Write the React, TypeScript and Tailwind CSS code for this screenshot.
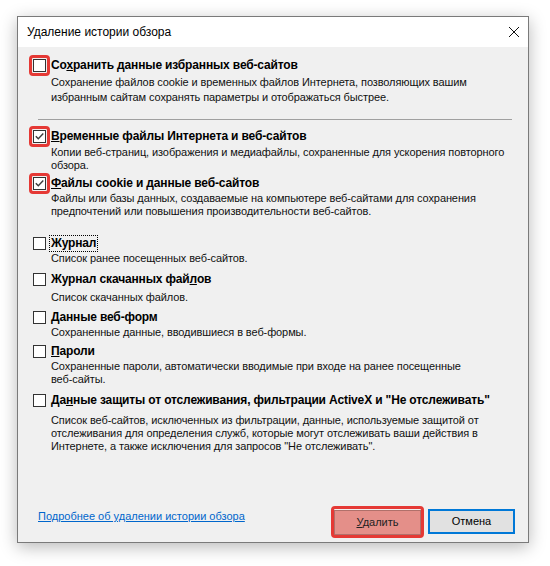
import type { ReactNode } from 'react';

const font = { fontFamily: '"Segoe UI", Tahoma, "Liberation Sans", "Noto Sans", sans-serif' };

function Check({ checked }: { checked: boolean }) {
  return (
    <div className="w-[13px] h-[13px] border border-[#333333] bg-white flex items-center justify-center shrink-0">
      {checked && (
        <svg width="11" height="11" viewBox="0 0 11 11">
          <path d="M1.8 5.2 L4.3 7.8 L9.3 2.6" fill="none" stroke="#3c3c3c" strokeWidth="1.4" />
        </svg>
      )}
    </div>
  );
}

function Box({ checked, marked }: { checked: boolean; marked?: boolean }) {
  return (
    <div className="relative w-[13px] h-[13px] shrink-0">
      {marked && (
        <div className="absolute -left-[4px] -top-[4px] w-[21px] h-[21px] rounded-[4px] border-[3px] border-[#e53935]" />
      )}
      <Check checked={checked} />
    </div>
  );
}

function Item({
  label,
  lines,
  checked = false,
  marked = false,
  focused = false,
  mt,
  descMt = '',
  leading = 'leading-[13px]',
}: {
  label: ReactNode;
  lines: string[];
  checked?: boolean;
  marked?: boolean;
  focused?: boolean;
  mt: string;
  descMt?: string;
  leading?: string;
}) {
  return (
    <div className={mt}>
      <div className="flex items-center h-[17px] gap-[4px]">
        <Box checked={checked} marked={marked} />
        <span
          className={`text-[12px] font-bold text-black leading-[15px] px-[1px] whitespace-nowrap tracking-[-0.15px] ${
            focused ? 'outline outline-1 outline-dotted outline-black' : ''
          }`}
        >
          {label}
        </span>
      </div>
      <div className={`pl-[18px] text-[11px] tracking-[-0.1px] text-[#111] whitespace-nowrap ${leading} ${descMt}`}>
        {lines.map((l) => (
          <div key={l}>{l}</div>
        ))}
      </div>
    </div>
  );
}

export default function App() {
  return (
    <div className="w-[550px] h-[566px] bg-white pt-[16px] pl-[17px]" style={font}>
      <div className="w-[512px] h-[527px] border border-[#7a7a7a] shadow-[0_4px_16px_rgba(0,0,0,0.28)] flex flex-col">
        {/* Title bar */}
        <div className="h-[30px] bg-white flex items-center justify-between pl-[9px] pr-[8px] shrink-0">
          <span className="text-[12px] text-black">Удаление истории обзора</span>
          <svg width="12" height="12" viewBox="0 0 12 12">
            <path d="M1 1 L11 11 M11 1 L1 11" stroke="#111" strokeWidth="1" />
          </svg>
        </div>

        {/* Content */}
        <div className="flex-1 bg-[#f0f0f0] flex flex-col pl-[15px] pr-[13px]">
          <Item
            mt="mt-[10px]"
            marked
            descMt="mt-[1px]"
            leading="leading-[15px]"
            label={
              <>
                Со<u>х</u>ранить данные избранных веб-сайтов
              </>
            }
            lines={[
              'Сохранение файлов cookie и временных файлов Интернета, позволяющих вашим',
              'избранным сайтам сохранять параметры и отображаться быстрее.',
            ]}
          />

          <div className="mt-[14px] ml-[5px] mr-[3px] h-px bg-[#a0a0a0]" />

          <Item
            mt="mt-[8px]"
            checked
            marked
            descMt="mt-[1px]"
            label={
              <>
                <u>В</u>ременные файлы Интернета и веб-сайтов
              </>
            }
            lines={[
              'Копии веб-страниц, изображения и медиафайлы, сохраненные для ускорения повторного',
              'обзора.',
            ]}
          />

          <Item
            mt="mt-[3px]"
            checked
            marked
            label={
              <>
                <u>Ф</u>айлы cookie и данные веб-сайтов
              </>
            }
            lines={[
              'Файлы или базы данных, создаваемые на компьютере веб-сайтами для сохранения',
              'предпочтений или повышения производительности веб-сайтов.',
            ]}
          />

          <Item mt="mt-[17px]" focused label="Журнал" lines={['Список ранее посещенных веб-сайтов.']} />

          <Item
            mt="mt-[6px]"
            descMt="mt-[3px]"
            label={
              <>
                Журнал скачанных фай<u>л</u>ов
              </>
            }
            lines={['Список скачанных файлов.']}
          />

          <Item
            mt="mt-[5px]"
            label={
              <>
                <u>Д</u>анные веб-форм
              </>
            }
            lines={['Сохраненные данные, вводившиеся в веб-формы.']}
          />

          <Item
            mt="mt-[4px]"
            label={
              <>
                <u>П</u>ароли
              </>
            }
            lines={[
              'Сохраненные пароли, автоматически вводимые при входе на ранее посещенные',
              'веб-сайты.',
            ]}
          />

          <Item
            mt="mt-[6px]"
            descMt="mt-[5px]"
            label={
              <>
                Да<u>н</u>ные защиты от отслеживания, фильтрации ActiveX и "Не отслеживать"
              </>
            }
            lines={[
              'Список веб-сайтов, исключенных из фильтрации, данные, используемые защитой от',
              'отслеживания для определения служб, которые могут отслеживать ваши действия в',
              'Интернете, а также исключения для запросов "Не отслеживать".',
            ]}
          />

          {/* Footer */}
          <div className="mt-[55px] flex items-start justify-between pl-[5px]">
            <a className="mt-[1px] text-[11px] text-[#0066cc] underline leading-[15px] whitespace-nowrap">
              Подробнее об удалении истории обзора
            </a>
            <div className="flex gap-[7px] mt-[1px]">
              <div className="relative">
                <div className="absolute -left-[3px] -top-[3px] -right-[3px] -bottom-[3px] rounded-[4px] border-[3px] border-[#e53935]" />
                <button className="w-[87px] h-[25px] bg-[#e48f89] border border-[#b0706a] text-[11px] text-[#222]">
                  <u>У</u>далить
                </button>
              </div>
              <button className="w-[87px] h-[25px] bg-[#e1e1e1] border-2 border-[#0078d7] text-[11px] text-black">
                Отмена
              </button>
            </div>
          </div>
        </div>
      </div>
    </div>
  );
}
